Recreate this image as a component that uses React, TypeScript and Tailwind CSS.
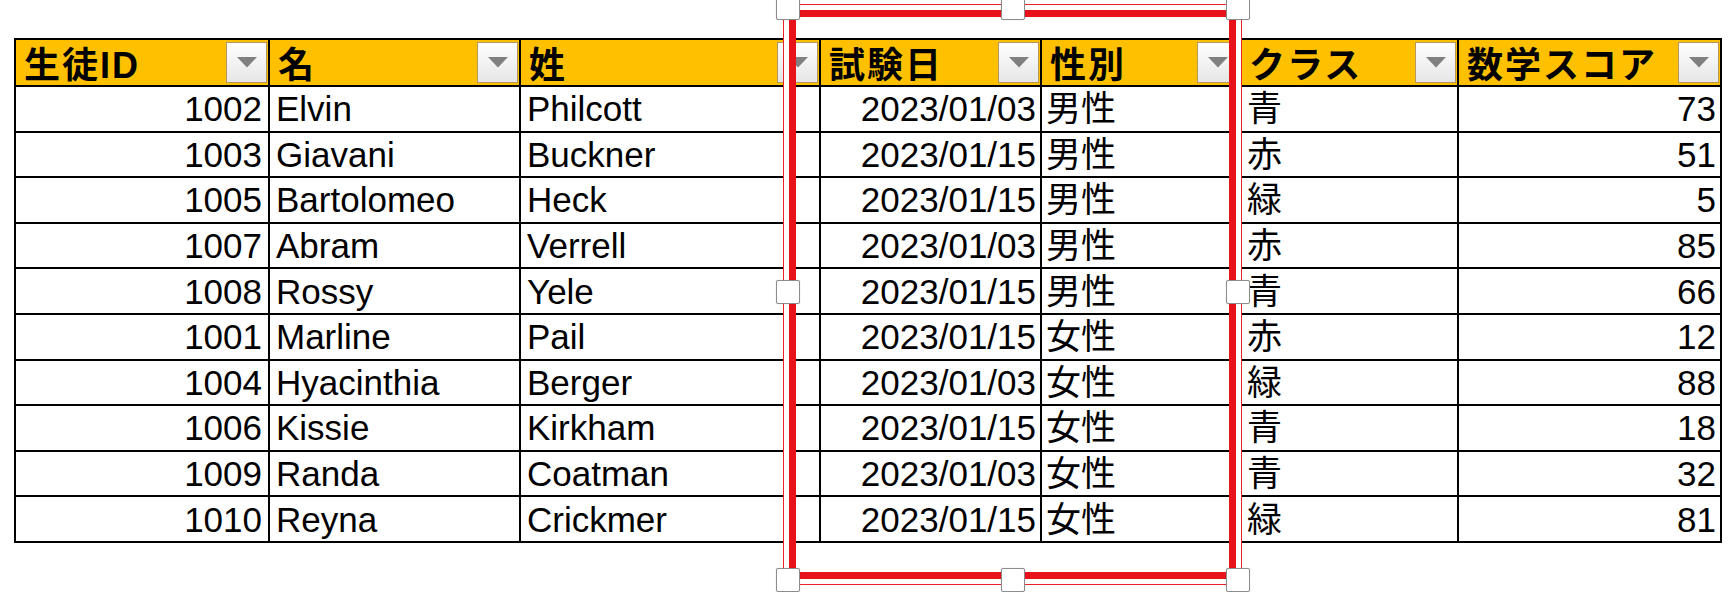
import React from 'react';

type Student = {
  id: number;
  first: string;
  last: string;
  date: string;
  gender: string;
  cls: string;
  math: number;
};

const students: Student[] = [
  { id: 1002, first: 'Elvin', last: 'Philcott', date: '2023/01/03', gender: '男性', cls: '青', math: 73 },
  { id: 1003, first: 'Giavani', last: 'Buckner', date: '2023/01/15', gender: '男性', cls: '赤', math: 51 },
  { id: 1005, first: 'Bartolomeo', last: 'Heck', date: '2023/01/15', gender: '男性', cls: '緑', math: 5 },
  { id: 1007, first: 'Abram', last: 'Verrell', date: '2023/01/03', gender: '男性', cls: '赤', math: 85 },
  { id: 1008, first: 'Rossy', last: 'Yele', date: '2023/01/15', gender: '男性', cls: '青', math: 66 },
  { id: 1001, first: 'Marline', last: 'Pail', date: '2023/01/15', gender: '女性', cls: '赤', math: 12 },
  { id: 1004, first: 'Hyacinthia', last: 'Berger', date: '2023/01/03', gender: '女性', cls: '緑', math: 88 },
  { id: 1006, first: 'Kissie', last: 'Kirkham', date: '2023/01/15', gender: '女性', cls: '青', math: 18 },
  { id: 1009, first: 'Randa', last: 'Coatman', date: '2023/01/03', gender: '女性', cls: '青', math: 32 },
  { id: 1010, first: 'Reyna', last: 'Crickmer', date: '2023/01/15', gender: '女性', cls: '緑', math: 81 },
];

const headers = ['生徒ID', '名', '姓', '試験日', '性別', 'クラス', '数学スコア'];

const FilterButton: React.FC = () => (
  <div className="w-[41px] h-[41px] mr-[1px] shrink-0 border border-[#b39660] bg-gradient-to-b from-white to-[#e6e6e6] flex items-center justify-center">
    <svg width="22" height="12" viewBox="0 0 22 12" className="-mt-[1px]">
      <polygon points="1,1 21,1 11,11.5" fill="#808080" />
    </svg>
  </div>
);

// sizing handle of the selected shape
const Handle: React.FC<{ hidden?: boolean }> = ({ hidden }) => (
  <div
    className={`w-[24px] h-[24px] rounded-[2px] ${
      hidden ? 'invisible' : 'bg-white border border-[#8c8c8c] shadow-[0_0_1px_rgba(0,0,0,0.3)]'
    }`}
  />
);

const App: React.FC = () => {
  const cell = 'bg-white h-[43.6px] flex items-center text-[35px] leading-none text-black';

  return (
    <div className="relative w-[1736px] h-[592px] bg-white overflow-hidden font-['Liberation_Sans','Noto_Sans_CJK_JP',sans-serif]">
      <div className="pl-[14px] pt-[38px]">
        <div className="inline-grid grid-cols-[252px_249px_298px_219px_197px_216px_261px] gap-[2px] p-[2px] bg-black">
          {headers.map((h) => (
            <div key={h} className="bg-[#ffc000] h-[45px] flex items-center justify-between pl-[8px]">
              <span className="text-[36px] font-bold tracking-[2px] leading-none text-black pt-[6px]">{h}</span>
              <FilterButton />
            </div>
          ))}
          {students.map((s) => (
            <React.Fragment key={s.id}>
              <div className={`${cell} justify-end pr-[6px]`}>{s.id}</div>
              <div className={`${cell} pl-[6px]`}>{s.first}</div>
              <div className={`${cell} pl-[6px]`}>{s.last}</div>
              <div className={`${cell} justify-end pr-[4px]`}>{s.date}</div>
              <div className={`${cell} pl-[4px]`}>{s.gender}</div>
              <div className={`${cell} pl-[6px]`}>{s.cls}</div>
              <div className={`${cell} justify-end pr-[4px]`}>{s.math}</div>
            </React.Fragment>
          ))}
        </div>
      </div>

      {/* red rectangle shape drawn over the sheet, with its double outline */}
      <div className="absolute left-[783px] top-[4px] w-[459px] h-[581px] border-[1.5px] border-[#e8262a]">
        <div className="w-full h-full border-[5px] border-white">
          <div className="w-full h-full border-[7px] border-[#e8121a]" />
        </div>
      </div>

      {/* selection handles */}
      <div className="absolute left-[776px] top-[-4px] w-[474px] h-[596px] flex flex-col justify-between">
        <div className="flex justify-between">
          <Handle />
          <Handle />
          <Handle />
        </div>
        <div className="flex justify-between -mt-[4px]">
          <Handle />
          <Handle hidden />
          <Handle />
        </div>
        <div className="flex justify-between">
          <Handle />
          <Handle />
          <Handle />
        </div>
      </div>
    </div>
  );
};

export default App;
